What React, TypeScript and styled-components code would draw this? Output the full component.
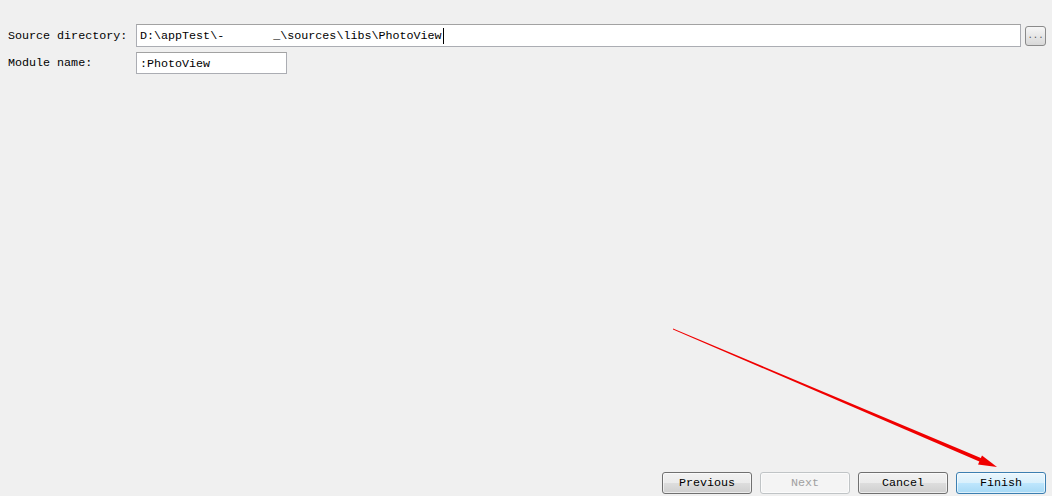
import styled, { createGlobalStyle } from "styled-components";

const GlobalStyle = createGlobalStyle`
  html, body { margin: 0; padding: 0; background: #f0f0f0; }
  body { font-family: "Liberation Mono", "DejaVu Sans Mono", monospace; }
  #root { height: 100vh; }
`;

const Page = styled.div`
  position: relative;
  height: 496px;
  box-sizing: border-box;
  padding: 24px 6px 2px 8px;
  display: flex;
  flex-direction: column;
  font-size: 11.7px;
  color: #000;
`;

const Form = styled.div`
  display: grid;
  grid-template-columns: 128px 1fr;
  row-gap: 5px;
  align-items: center;
`;

const Label = styled.label`
  white-space: pre;
  line-height: 22px;
`;

const FieldRow = styled.div`
  display: flex;
  align-items: center;
  gap: 4px;
`;

const TextBox = styled.div<{ $width?: number }>`
  box-sizing: border-box;
  height: ${(p) => (p.$width ? 22 : 23)}px;
  width: ${(p) => (p.$width ? `${p.$width}px` : "auto")};
  flex: ${(p) => (p.$width ? "none" : 1)};
  background: #fff;
  border: 1px solid #abadb3;
  border-top-color: #a2a2a2;
  padding: 1px 3px 0;
  line-height: 20px;
  white-space: pre;
  display: flex;
  align-items: center;
`;

const Caret = styled.span`
  display: inline-block;
  width: 1px;
  height: 16px;
  background: #000;
  margin-left: 1px;
`;

const BrowseButton = styled.button`
  box-sizing: border-box;
  width: 21px;
  height: 20px;
  padding: 0;
  border: 1px solid #8a8a8a;
  border-radius: 3px;
  background: linear-gradient(#f6f6f6, #d8d8d8);
  font: inherit;
  font-size: 9px;
  line-height: 10px;
  color: #555;
`;

const Spacer = styled.div`
  flex: 1;
`;

const Footer = styled.div`
  display: flex;
  justify-content: flex-end;
  gap: 8px;
`;

const WizardButton = styled.button<{ $variant?: "default" | "disabled" | "primary" }>`
  box-sizing: border-box;
  width: 90px;
  height: 22px;
  padding: 0;
  border-radius: 3px;
  font: inherit;
  font-size: 11.7px;
  border: 1px solid
    ${(p) =>
      p.$variant === "primary" ? "#3c7fb1" : p.$variant === "disabled" ? "#c0c4c6" : "#707070"};
  background: ${(p) =>
    p.$variant === "primary"
      ? "linear-gradient(#eaf6fd 0%, #d9f0fc 50%, #bee6fd 51%, #a7d9f5 100%)"
      : p.$variant === "disabled"
      ? "#f4f4f4"
      : "linear-gradient(#f2f2f2 0%, #ebebeb 50%, #dddddd 51%, #cfcfcf 100%)"};
  color: ${(p) => (p.$variant === "disabled" ? "#a0a0a0" : "#000")};
  box-shadow: inset 0 0 0 1px rgba(255, 255, 255, 0.6);
`;

const Overlay = styled.svg`
  position: absolute;
  inset: 0;
  pointer-events: none;
`;

export default function App() {
  return (
    <>
      <GlobalStyle />
      <Page>
        <Form>
          <Label>Source directory:</Label>
          <FieldRow>
            <TextBox>
              {"D:\\appTest\\-       _\\sources\\libs\\PhotoView"}
              <Caret />
            </TextBox>
            <BrowseButton>...</BrowseButton>
          </FieldRow>
          <Label>Module name:</Label>
          <FieldRow>
            <TextBox $width={151}>:PhotoView</TextBox>
          </FieldRow>
        </Form>
        <Spacer />
        <Footer>
          <WizardButton>Previous</WizardButton>
          <WizardButton $variant="disabled">Next</WizardButton>
          <WizardButton>Cancel</WizardButton>
          <WizardButton $variant="primary">Finish</WizardButton>
        </Footer>
        <Overlay width="1052" height="496" viewBox="0 0 1052 496">
          <polygon points="673,328.6 673,329.4 982.2,462.8 983.8,459.2" fill="#f00000" />
          <polygon points="978,464.6 982,455.4 997,467" fill="#f00000" />
        </Overlay>
      </Page>
    </>
  );
}
